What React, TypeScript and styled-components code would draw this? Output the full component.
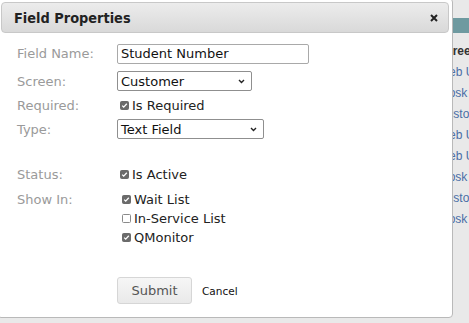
import React from 'react';
import styled, { createGlobalStyle } from 'styled-components';

const GlobalStyle = createGlobalStyle`
  html, body {
    margin: 0;
    padding: 0;
    background: #e9e9e9;
  }
  body {
    font-family: "DejaVu Sans", Verdana, sans-serif;
    overflow: hidden;
  }
`;

const Page = styled.div`
  position: relative;
  width: 469px;
  height: 323px;
  overflow: hidden;
  background: #e9e9e9;
`;

// table of the page behind the dialog
const Backdrop = styled.div`
  padding-top: 18px;
`;

const TealBar = styled.div`
  height: 15px;
  background: #6e9aa0;
  margin-bottom: 8px;
`;

const Column = styled.div`
  display: flex;
  flex-direction: column;
  padding-left: 438px;
`;

const Cell = styled.div<{ $head?: boolean }>`
  height: 21px;
  line-height: 21px;
  font-family: "Liberation Sans", Arial, sans-serif;
  font-size: 12px;
  white-space: nowrap;
  font-weight: ${(p) => (p.$head ? 700 : 400)};
  color: ${(p) => (p.$head ? '#333' : '#4b6ea6')};
`;

const Dialog = styled.div`
  position: absolute;
  left: -3px;
  top: -2px;
  width: 448px;
  height: 312px;
  padding: 3px;
  background: #fff;
  border: 1px solid #b9b9b9;
  border-radius: 4px;
  box-sizing: content-box;
  display: flex;
  flex-direction: column;
`;

const TitleBar = styled.div`
  height: 29px;
  display: flex;
  align-items: center;
  justify-content: space-between;
  padding: 0 10px 0 12px;
  border: 1px solid #c8c8c8;
  border-radius: 4px;
  background: linear-gradient(#ececec, #d9d9d9);
`;

const Title = styled.span`
  font-family: "DejaVu Sans Condensed", "DejaVu Sans", sans-serif;
  font-stretch: condensed;
  font-weight: 700;
  font-size: 14.4px;
  color: #222;
`;

const CloseButton = styled.button`
  border: none;
  background: none;
  padding: 0;
  display: flex;
  cursor: pointer;
`;

const Form = styled.form`
  display: flex;
  flex-direction: column;
  padding: 5px 0 0 16px;
`;

const Row = styled.div<{ $h: number; $top?: number }>`
  display: grid;
  grid-template-columns: 100px 1fr;
  align-items: center;
  height: ${(p) => p.$h}px;
  margin-top: ${(p) => p.$top || 0}px;
`;

const ListRow = styled.div<{ $top?: number }>`
  display: grid;
  grid-template-columns: 100px 1fr;
  align-items: start;
  margin-top: ${(p) => p.$top || 0}px;
`;

const Label = styled.label`
  font-size: 13px;
  color: #9a9a9a;
  line-height: 19px;
`;

const TextInput = styled.input`
  width: 192px;
  height: 20px;
  box-sizing: border-box;
  border: 1px solid #a9a9a9;
  border-radius: 2px;
  padding: 0 3px;
  font-family: "DejaVu Sans", sans-serif;
  font-size: 13px;
  color: #111;
  outline: none;
`;

const Select = styled.div<{ $w: number }>`
  width: ${(p) => p.$w}px;
  height: 20px;
  box-sizing: border-box;
  border: 1px solid #8f8f8f;
  border-radius: 2px;
  padding: 0 6px 0 3px;
  display: flex;
  align-items: center;
  justify-content: space-between;
  font-size: 13px;
  color: #111;
  background: #fff;
`;

const CheckLine = styled.label<{ $indent?: number }>`
  display: flex;
  align-items: center;
  gap: 3px;
  height: 19px;
  padding-left: ${(p) => p.$indent || 0}px;
  font-size: 13px;
  color: #222;
`;

const Box = styled.span<{ $on: boolean }>`
  width: 9px;
  height: 9px;
  box-sizing: border-box;
  border-radius: 1.5px;
  display: flex;
  align-items: center;
  justify-content: center;
  background: ${(p) => (p.$on ? '#6b6b6b' : '#fff')};
  border: 1px solid ${(p) => (p.$on ? '#6b6b6b' : '#8a8a8a')};
`;

const Stack = styled.div`
  display: flex;
  flex-direction: column;
`;

const Actions = styled.div`
  display: flex;
  align-items: center;
  gap: 10px;
  margin: 30px 0 0 100px;
`;

const SubmitButton = styled.button`
  width: 75px;
  height: 27px;
  border: 1px solid #d6d6d6;
  border-radius: 3px;
  background: linear-gradient(#f6f6f6, #e9e9e9);
  font-family: "DejaVu Sans", sans-serif;
  font-size: 13px;
  color: #555;
  padding: 0;
`;

const CancelLink = styled.a`
  font-size: 10.5px;
  color: #111;
  text-decoration: none;
  margin-top: 1px;
`;

const Chevron = () => (
  <svg width="7" height="5" viewBox="0 0 7 5">
    <path d="M1 1l2.5 2.5L6 1" fill="none" stroke="#222" strokeWidth="1.4" />
  </svg>
);

const Check: React.FC<{ on: boolean }> = ({ on }) => (
  <Box $on={on}>
    {on && (
      <svg width="7" height="7" viewBox="0 0 7 7">
        <path d="M1.2 3.6l1.5 1.5L5.8 1.8" fill="none" stroke="#fff" strokeWidth="1.3" />
      </svg>
    )}
  </Box>
);

const rows = [
  { text: 'Screen', head: true },
  { text: 'Web User' },
  { text: 'Kiosk' },
  { text: 'Customer' },
  { text: 'Web User' },
  { text: 'Web User' },
  { text: 'Kiosk' },
  { text: 'Customer' },
  { text: 'Kiosk' },
];

const App: React.FC = () => {
  return (
    <Page>
      <GlobalStyle />
      <Backdrop>
        <TealBar />
        <Column>
          {rows.map((r, i) => (
            <Cell key={i} $head={r.head}>
              {r.text}
            </Cell>
          ))}
        </Column>
      </Backdrop>
      <Dialog>
        <TitleBar>
          <Title>Field Properties</Title>
          <CloseButton type="button">
            <svg width="8" height="8" viewBox="0 0 8 8">
              <path d="M1 1l6 6M7 1L1 7" stroke="#222" strokeWidth="2" />
            </svg>
          </CloseButton>
        </TitleBar>
        <Form onSubmit={(e) => e.preventDefault()}>
          <Row $h={31}>
            <Label>Field Name:</Label>
            <TextInput defaultValue="Student Number" />
          </Row>
          <Row $h={24}>
            <Label>Screen:</Label>
            <Select $w={135}>
              Customer
              <Chevron />
            </Select>
          </Row>
          <Row $h={24}>
            <Label>Required:</Label>
            <CheckLine $indent={3}>
              <Check on />
              Is Required
            </CheckLine>
          </Row>
          <Row $h={24}>
            <Label>Type:</Label>
            <Select $w={147}>
              Text Field
              <Chevron />
            </Select>
          </Row>
          <Row $h={25} $top={21}>
            <Label>Status:</Label>
            <CheckLine $indent={3}>
              <Check on />
              Is Active
            </CheckLine>
          </Row>
          <ListRow $top={3}>
            <Label>Show In:</Label>
            <Stack>
              <CheckLine $indent={5}>
                <Check on />
                Wait List
              </CheckLine>
              <CheckLine $indent={5}>
                <Check on={false} />
                In-Service List
              </CheckLine>
              <CheckLine $indent={5}>
                <Check on />
                QMonitor
              </CheckLine>
            </Stack>
          </ListRow>
          <Actions>
            <SubmitButton type="submit">Submit</SubmitButton>
            <CancelLink href="#">Cancel</CancelLink>
          </Actions>
        </Form>
      </Dialog>
    </Page>
  );
};

export default App;
